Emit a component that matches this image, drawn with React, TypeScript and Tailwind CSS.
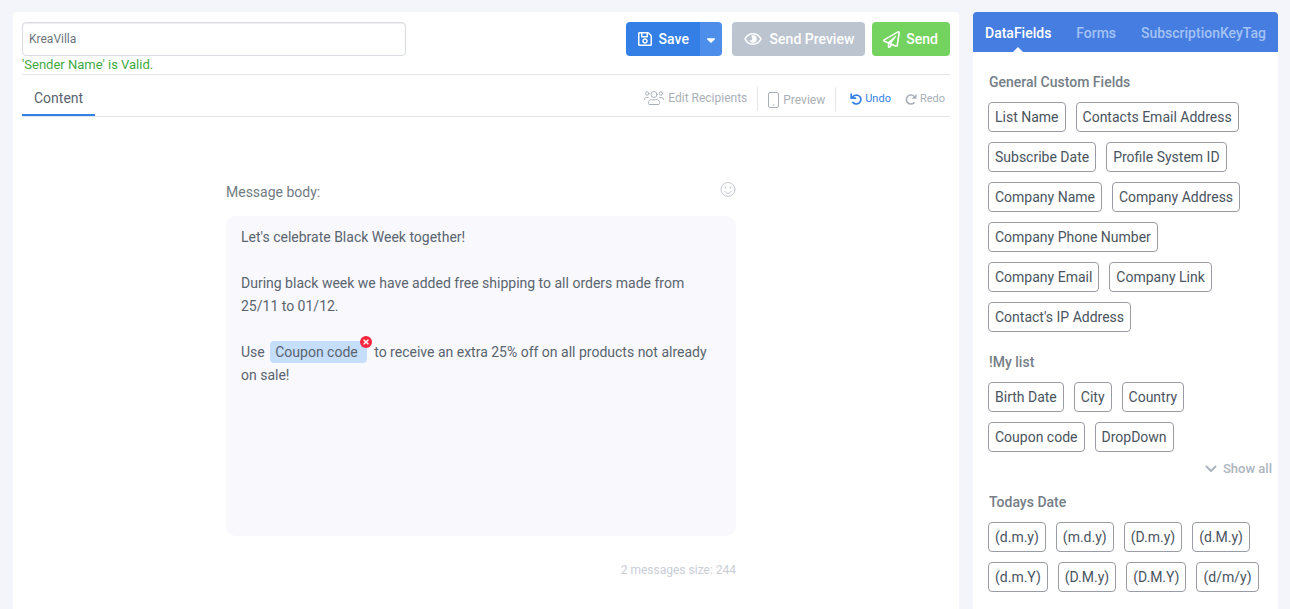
import type { ReactNode } from "react";
import { FaCaretDown, FaRegPaperPlane, FaRegSave, FaTimes } from "react-icons/fa";

const sections = [
  {
    title: "General Custom Fields",
    fields: [
      "List Name",
      "Contacts Email Address",
      "Subscribe Date",
      "Profile System ID",
      "Company Name",
      "Company Address",
      "Company Phone Number",
      "Company Email",
      "Company Link",
      "Contact's IP Address",
    ],
  },
  {
    title: "!My list",
    fields: ["Birth Date", "City", "Country", "Coupon code", "DropDown"],
    more: true,
  },
  {
    title: "Todays Date",
    fields: ["(d.m.y)", "(m.d.y)", "(D.m.y)", "(d.M.y)", "(d.m.Y)", "(D.M.y)", "(D.M.Y)", "(d/m/y)"],
  },
];

function Icon({ className, box, children }: { className: string; box: string; children: ReactNode }) {
  return (
    <svg
      className={className}
      viewBox={box}
      fill="none"
      stroke="currentColor"
      strokeLinecap="round"
      strokeLinejoin="round"
      aria-hidden="true"
    >
      {children}
    </svg>
  );
}

function EyeIcon() {
  return (
    <Icon className="w-[18px] h-3.5" box="0 0 18 14">
      <path d="M1 7c1.8-3.500 4.700-5.200 8-5.200s6.200 1.700 8 5.200c-1.800 3.500-4.700 5.200-8 5.200s-6.200-1.700-8-5.200z" strokeWidth="1.600" />
      <path d="M9 3.300a3.700 3.700 0 1 1-3.600 4.500 1.700 1.700 0 0 0 2.500-2.500c-.2-.4-.5-.8-.5-1.600.5-.3 1-.4 1.600-.4z" fill="currentColor" stroke="none" />
    </Icon>
  );
}

function UsersIcon() {
  return (
    <Icon className="w-5 h-4" box="0 0 20 16">
      <circle cx="10" cy="4.500" r="3" />
      <circle cx="3.200" cy="3.500" r="1.700" />
      <circle cx="16.800" cy="3.500" r="1.700" />
      <path d="M5.500 14.500h9c.6 0 1-.4 1-1v-1c0-1.700-1.300-3-3-3-.8 0-1.200.5-2.500.5s-1.700-.5-2.500-.5c-1.700 0-3 1.300-3 3v1c0 .6.4 1 1 1z" />
      <path d="M.5 9.500c0-1.200.9-2 2-2h1.800M19.500 9.500c0-1.200-.9-2-2-2h-1.800" />
    </Icon>
  );
}

function PhoneIcon() {
  return (
    <Icon className="w-[11px] h-4" box="0 0 11 16">
      <rect x=".5" y=".5" width="10" height="15" rx="1.500" />
      <circle cx="5.500" cy="13" r=".8" fill="currentColor" stroke="none" />
    </Icon>
  );
}

function UndoIcon() {
  return (
    <Icon className="w-3 h-3" box="0 0 12 12">
      <path d="M1.200 1v4.200h4.300M1.600 5C3.200 2.900 4.800 2 6.500 2a4.500 4.500 0 1 1-3.600 7.400" strokeWidth="1.700" />
    </Icon>
  );
}

function RedoIcon() {
  return (
    <Icon className="w-3 h-3" box="0 0 12 12">
      <path d="M9 9.800A4.500 4.500 0 1 1 9.200 3.500" strokeWidth="1.600" />
      <path d="M11.500 1v4.800H6.700z" fill="currentColor" stroke="none" />
    </Icon>
  );
}

function SmileIcon() {
  return (
    <Icon className="w-4 h-4" box="0 0 16 16">
      <circle cx="8" cy="7.500" r="7" />
      <path d="M4.800 9.300c.8 1.300 1.900 1.900 3.200 1.900s2.400-.6 3.200-1.900" />
      <circle cx="5.600" cy="5.500" r=".9" fill="currentColor" stroke="none" />
      <circle cx="10.400" cy="5.500" r=".9" fill="currentColor" stroke="none" />
    </Icon>
  );
}

function Toolbar() {
  return (
    <header className="flex items-start justify-between border-b border-[#e2e5ea]">
      <div className="w-96">
        <input
          type="text"
          aria-label="Sender Name"
          defaultValue="KreaVilla"
          className="block w-full h-[34px] px-1.5 border border-[#d9dce2] rounded text-xs text-[#6c757d] shadow-[inset_0_1px_1px_rgba(0,0,0,0.07)]"
        />
        <p className="h-[18px] text-[13px] leading-[18px] text-[#43a843]">'Sender Name' is Valid.</p>
      </div>
      <div className="flex h-[34px] text-sm font-medium text-white">
        <div className="flex mr-2.5 rounded overflow-hidden">
          <button type="button" className="flex items-center gap-1.5 w-[74px] pl-[11px] bg-[#337fe5]">
            <FaRegSave className="w-4 h-4" />
            Save
          </button>
          <button type="button" aria-label="More save options" className="flex items-center justify-center w-[22px] pt-0.5 bg-[#4d8eea]">
            <FaCaretDown className="w-3.5 h-3.5" />
          </button>
        </div>
        <button type="button" className="flex items-center gap-2 pl-3 pr-[11px] mr-[7px] rounded bg-[#bbc4cf]">
          <EyeIcon />
          Send Preview
        </button>
        <button type="button" className="flex items-center gap-1.5 pl-[11px] pr-3 rounded bg-[#74d35f]">
          <FaRegPaperPlane className="w-[17px] h-[17px]" />
          Send
        </button>
      </div>
    </header>
  );
}

function TabBar() {
  return (
    <nav className="flex justify-between h-[42px] border-b border-[#e2e5ea]">
      <button type="button" className="px-3 pt-1.5 border-b-2 border-[#337fe5] text-sm text-[#5a646e]">
        Content
      </button>
      <div className="flex items-center pt-1.5 text-xs text-[#a9b0b8]">
        <button type="button" className="flex items-center gap-1 h-6 pr-2.5 pb-0.5">
          <UsersIcon />
          Edit Recipients
        </button>
        <button type="button" className="flex items-center gap-1 h-6 px-2.5 pt-0.5 border-x border-[#e2e5ea]">
          <PhoneIcon />
          Preview
        </button>
        <button type="button" className="flex items-center gap-[3px] pl-3.5 text-[11px] leading-4 text-[#337fe5]">
          <UndoIcon />
          Undo
        </button>
        <button type="button" className="flex items-center gap-[3px] pl-3.5 pr-[5px] text-[11px] leading-4">
          <RedoIcon />
          Redo
        </button>
      </div>
    </nav>
  );
}

function Editor() {
  return (
    <section className="pt-[65px] pr-2.5 text-[#5a646e]">
      <div className="max-w-[510px] mx-auto">
        <div className="flex items-start justify-between h-[34px] text-sm text-[#727b84]">
          <span id="body-label">Message body:</span>
          <button type="button" aria-label="Insert emoji" className="text-[#c3c8d2]">
            <SmileIcon />
          </button>
        </div>
        <div
          role="textbox"
          aria-multiline="true"
          aria-labelledby="body-label"
          contentEditable
          suppressContentEditableWarning
          className="h-80 px-[15px] py-2.5 rounded-[10px] bg-[#f8f8fd] text-sm leading-[23px]"
        >
          <p>Let's celebrate Black Week together!</p>
          <br />
          <p>During black week we have added free shipping to all orders made from 25/11 to 01/12.</p>
          <br />
          <p>
            Use{" "}
            <span className="relative inline-block h-[22px] pl-[5px] pr-[9px] ml-0.5 mr-1 rounded bg-[#c5defc] leading-[22px]">
              Coupon code
              <button
                type="button"
                aria-label="Remove field"
                className="absolute -top-[5px] -right-[5px] flex items-center justify-center w-3 h-3 rounded-full bg-[#f5253f] text-white"
              >
                <FaTimes className="w-2 h-2" />
              </button>
            </span>{" "}
            to receive an extra 25% off on all products not already on sale!
          </p>
        </div>
        <p className="pt-[25px] text-right text-xs leading-[18px] text-[#c9cdd6]">2 messages size: 244</p>
      </div>
    </section>
  );
}

function Sidebar() {
  return (
    <aside className="w-[305px] shrink-0 bg-white rounded-t overflow-hidden">
      <nav className="flex justify-between h-10 px-3 pt-0.5 bg-[#467de0] text-sm font-medium text-[#a3c2f5]">
        <button type="button" className="relative text-white">
          DataFields
          <span className="absolute bottom-0 left-1/2 -ml-[5px] border-x-[5px] border-b-[5px] border-x-transparent border-b-white" />
        </button>
        <button type="button">Forms</button>
        <button type="button">SubscriptionKeyTag</button>
      </nav>
      {sections.map((s) => (
        <section key={s.title} className="pt-5 pl-[15px] pr-1.5">
          <h2 className="mb-2.5 pl-px text-sm leading-5 font-medium text-[#757e87]">{s.title}</h2>
          <div className="flex flex-wrap gap-2.5">
            {s.fields.map((f) => (
              <button
                key={f}
                type="button"
                className="h-[30px] px-1.5 border border-[#9a9ca5] rounded text-sm text-[#4a545e]"
              >
                {f}
              </button>
            ))}
          </div>
          {s.more && (
            <button type="button" className="flex items-center gap-1.5 h-5 mt-[7px] -mb-[7px] ml-auto text-[13px] font-medium text-[#adb5c0]">
              <Icon className="w-3 h-2" box="0 0 12 8">
                <path d="M1.500 1.500 6 6l4.500-4.500" strokeWidth="2" />
              </Icon>
              Show all
            </button>
          )}
        </section>
      ))}
    </aside>
  );
}

export default function App() {
  return (
    <div className="flex gap-3.5 min-h-screen pt-3 pl-[13px] pr-3 bg-[#f4f4fb] font-[Roboto,sans-serif]">
      <main className="flex-1 pt-2.5 px-[9px] bg-white rounded-t">
        <Toolbar />
        <TabBar />
        <Editor />
      </main>
      <Sidebar />
    </div>
  );
}
